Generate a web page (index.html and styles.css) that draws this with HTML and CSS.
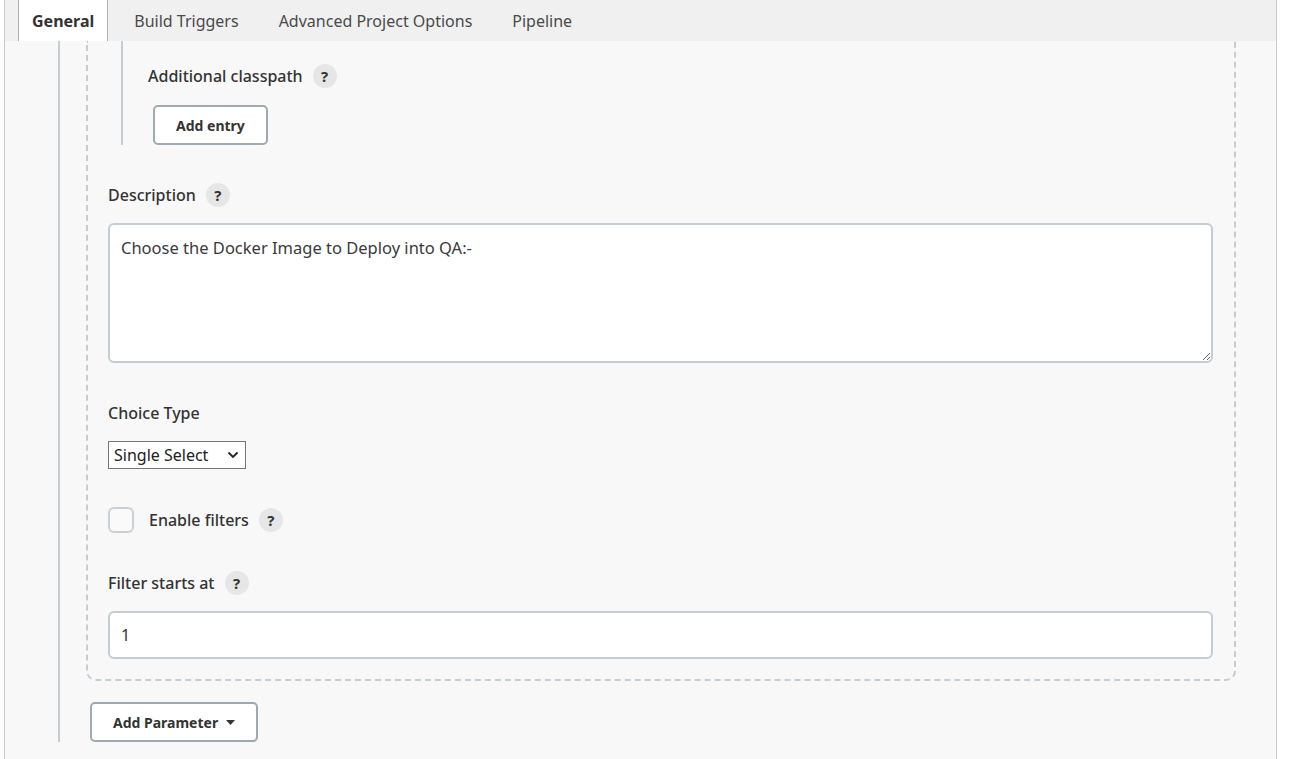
FILE: index.html
```html
<!DOCTYPE html>
<html>
<head>
<meta charset="utf-8">
<link rel="stylesheet" href="styles.css">
</head>
<body>
<div class="frame">
  <div class="tabbar">
    <div class="tab active">General</div>
    <div class="tab">Build Triggers</div>
    <div class="tab">Advanced Project Options</div>
    <div class="tab">Pipeline</div>
  </div>
  <div class="scroll">
    <div class="section">
      <div class="repeated">
        <div class="optional">
          <div class="label">Additional classpath <span class="help">?</span></div>
          <button class="btn entry-btn">Add entry</button>
        </div>

        <div class="field">
          <div class="label">Description <span class="help">?</span></div>
          <textarea class="textarea" readonly>Choose the Docker Image to Deploy into QA:-</textarea>
        </div>

        <div class="field">
          <div class="label">Choice Type</div>
          <div class="select">
            <span>Single Select</span>
            <svg class="chev" width="12" height="8" viewBox="0 0 12 8"><path d="M1.5 1.5 L6 6 L10.5 1.5" fill="none" stroke="#222" stroke-width="1.8"/></svg>
          </div>
        </div>

        <div class="field check-row">
          <span class="checkbox"></span>
          <span class="check-label">Enable filters</span>
          <span class="help">?</span>
        </div>

        <div class="field">
          <div class="label">Filter starts at <span class="help">?</span></div>
          <input class="input" type="text" value="1" readonly>
        </div>
      </div>
      <button class="btn param-btn">Add Parameter
        <svg class="caret" width="9" height="6" viewBox="0 0 9 6"><path d="M0 0 H9 L4.5 5 Z" fill="#333"/></svg>
      </button>
    </div>
  </div>
</div>
</body>
</html>
```

FILE: styles.css
```css
html, body {
  margin: 0;
  padding: 0;
  background: #ffffff;
}

body {
  font-family: "Noto Sans", "Open Sans", sans-serif;
  color: #333;
}

.frame {
  box-sizing: border-box;
  margin-left: 4px;
  width: 1273px;
  height: 759px;
  border-left: 1px solid #c3ccd1;
  border-right: 1px solid #c3ccd1;
  background: #f8f8f8;
  overflow: hidden;
}

.tabbar {
  display: flex;
  gap: 12px;
  height: 41px;
  padding-left: 13px;
  background: #f0f0f0;
}

.tab {
  display: flex;
  align-items: center;
  padding: 0 13px;
  border-left: 1px solid transparent;
  border-right: 1px solid transparent;
  font-size: 16px;
  color: #4a4a4a;
}

.tab.active {
  background: #ffffff;
  border-color: #a6b1b8;
  font-weight: 700;
  color: #333;
}

.scroll {
  padding-left: 53px;
  padding-right: 40px;
}

.section {
  border-left: 2px solid #c5cdd3;
  padding-left: 26px;
}

.repeated {
  border: 2px dashed #c5cdd3;
  border-top: none;
  border-radius: 0 0 10px 10px;
  padding: 0 21px 20px 20px;
}

.optional {
  margin-left: 13px;
  border-left: 2px solid #c5cdd3;
  padding-left: 25px;
  padding-top: 23px;
}

.label {
  display: flex;
  align-items: center;
  height: 24px;
  font-size: 16px;
  font-weight: 500;
  color: #333;
}

.help {
  display: inline-flex;
  align-items: center;
  justify-content: center;
  width: 24px;
  height: 24px;
  margin-left: 10px;
  border-radius: 50%;
  background: #e6e6e6;
  font-size: 15px;
  font-weight: 700;
  color: #333;
}

.btn {
  display: inline-flex;
  align-items: center;
  box-sizing: border-box;
  height: 40px;
  background: #ffffff;
  border: 2px solid #9ea9b0;
  border-radius: 5px;
  font-family: "Noto Sans", "Open Sans", sans-serif;
  font-size: 14px;
  font-weight: 700;
  color: #333;
}

.entry-btn {
  margin-top: 17px;
  margin-left: 5px;
  padding: 0 21px;
}

.param-btn {
  margin-top: 21px;
  margin-left: 4px;
  padding: 0 21px;
  gap: 8px;
}

.caret {
  margin-top: 1px;
}

.field {
  margin-top: 38px;
}

.textarea,
.input {
  display: block;
  box-sizing: border-box;
  width: 100%;
  margin-top: 16px;
  border: 2px solid #c5cdd3;
  border-radius: 6px;
  background: #ffffff;
  font-family: "Noto Sans", "Open Sans", sans-serif;
  font-size: 16px;
  color: #333;
  outline: none;
}

.textarea {
  height: 140px;
  padding: 11px 11px;
  font-size: 16.5px;
  line-height: 24px;
  color: #3a3a3a;
  resize: both;
}

.input {
  height: 48px;
  padding: 0 11px;
}

.select {
  display: inline-flex;
  align-items: center;
  box-sizing: border-box;
  margin-top: 16px;
  width: 138px;
  height: 28px;
  padding: 0 4px 0 5px;
  border: 1px solid #767676;
  background: #ffffff;
  font-size: 16px;
  color: #222;
  justify-content: space-between;
}

.chev {
  margin-right: 2px;
}

.check-row {
  display: flex;
  align-items: center;
}

.checkbox {
  box-sizing: border-box;
  width: 26px;
  height: 26px;
  border: 2px solid #c8d0d6;
  border-radius: 6px;
  background: #fafafa;
}

.check-label {
  margin-left: 15px;
  font-size: 16px;
  font-weight: 500;
  color: #333;
}
```
